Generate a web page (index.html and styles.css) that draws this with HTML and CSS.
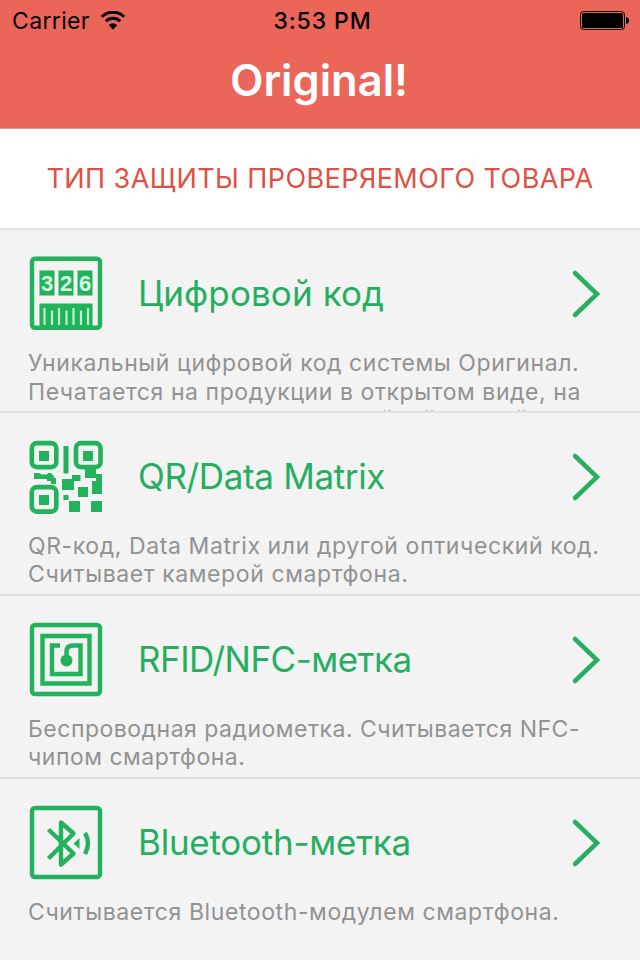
FILE: index.html
```html
<!DOCTYPE html>
<html lang="ru">
<head>
<meta charset="utf-8">
<title>Original!</title>
<link rel="stylesheet" href="styles.css">
</head>
<body>
<header class="navbar">
  <div class="status">
    <div class="carrier"><span>Carrier</span>
      <svg class="wifi" width="26" height="20" viewBox="0 0 26 20"><path d="M1.800 5.700a16 16 0 0 1 22.400 0M5.800 10.200a10.300 10.300 0 0 1 14.400 0" fill="none" stroke="#000" stroke-width="3"/><path d="M8.700 14a6.200 6.200 0 0 1 8.600 0L13 18.700z"/></svg>
    </div>
    <div class="clock">3:53 PM</div>
    <div class="power">
      <svg width="50" height="20" viewBox="0 0 50 20"><rect x=".5" y=".5" width="44" height="18" rx="3" fill="none" stroke="#000"/><rect x="2" y="2" width="41" height="15" rx="1.500"/><path d="M46 6q3 .5 3 3.500t-3 3.500z"/></svg>
    </div>
  </div>
  <h1 class="title">Original!</h1>
</header>
<h2 class="section">ТИП ЗАЩИТЫ ПРОВЕРЯЕМОГО ТОВАРА</h2>
<main class="list">
  <article class="row">
    <div class="head">
      <svg class="icon" viewBox="0 0 76 76"><rect x="4" y="3.800" width="68" height="69" rx="3" fill="none" stroke="#22b25b" stroke-width="4.400"/><path fill="#22b25b" d="M11.500 15.500h15v25h-15zm19 0h15v25h-15zm19 0h15v25h-15zM11.500 48.500h53V73h-53z"/><g class="digits"><text x="19" y="36">3</text><text x="38" y="36">2</text><text x="57" y="36">6</text></g><path d="M16.500 53v17M24 55.500v14.500M31 53v17M38.500 55.500v14.500M45.500 53v17M53 55.500v14.500M60 53v17" stroke="#b9f3cc" stroke-width="2.200"/></svg>
      <h3 class="name n1">Цифровой код</h3>
      <svg class="chevron" viewBox="0 0 30 50"><path d="M4 4l22 21L4 46"/></svg>
    </div>
    <p class="desc d1">Уникальный цифровой код системы Оригинал.<br>Печатается на продукции в открытом виде, на<br>упаковках или этикетке с двойной меткой</p>
  </article>
  <article class="row">
    <div class="head">
      <svg class="icon" viewBox="0 0 76 76"><g fill="none" stroke="#22b25b" stroke-width="4.600"><rect x="3.800" y="5.100" width="24.500" height="24" rx="5"/><rect x="48" y="5.100" width="24.500" height="24" rx="5"/><rect x="3.800" y="49.100" width="24.500" height="24.500" rx="5"/></g><path fill="#22b25b" d="M11 13h10v10H11zm44 0h10v10H55zM11 57h10v10H11zM35.500 8h5v27.500h-5zM6 35h5l3 1.500h5l1-1.500h3l3 3.500v1.500h2v6h-5v-3h-4v-2H6zM44 37h8.500v6H46v9H34V41h10zM57 31h11v5h6v20H64V43h4v-3H57zM50 49h10v10H50zM35.500 57h5v5h-5zM41 63h11v11H41zm22 0h11v11H63z"/></svg>
      <h3 class="name n2">QR/Data Matrix</h3>
      <svg class="chevron" viewBox="0 0 30 50"><path d="M4 4l22 21L4 46"/></svg>
    </div>
    <p class="desc d2">QR-код, Data Matrix или другой оптический код.<br>Считывает камерой смартфона.</p>
  </article>
  <article class="row">
    <div class="head">
      <svg class="icon" viewBox="0 0 76 76"><g fill="none" stroke="#22b25b" stroke-width="4.400"><rect x="4" y="4" width="68" height="69" rx="3"/><path d="M14.500 15h47v47.500h-47z"/><path d="M32 24.500h-8v28.500h28.500V24.500H45q-6.500 0-6.500 6V40"/></g><circle cx="38.500" cy="39.500" r="6" fill="#22b25b"/></svg>
      <h3 class="name n3">RFID/NFC-метка</h3>
      <svg class="chevron" viewBox="0 0 30 50"><path d="M4 4l22 21L4 46"/></svg>
    </div>
    <p class="desc d3">Беспроводная радиометка. Считывается NFC-<br>чипом смартфона.</p>
  </article>
  <article class="row">
    <div class="head">
      <svg class="icon" viewBox="0 0 76 76"><g fill="none" stroke="#22b25b" stroke-width="4.400"><rect x="4" y="4" width="68" height="69" rx="3"/><path stroke-linejoin="round" d="M20.500 25.500L45.500 49.500 33 60.500V18.500l12.500 11L20.500 54.500"/><path d="M57 29q6 10 0 21"/></g><path fill="#22b25b" d="M45.500 39.500l6-5.500v11z"/></svg>
      <h3 class="name n4">Bluetooth-метка</h3>
      <svg class="chevron" viewBox="0 0 30 50"><path d="M4 4l22 21L4 46"/></svg>
    </div>
    <p class="desc d4">Считывается Bluetooth-модулем смартфона.</p>
  </article>
</main>
</body>
</html>
```
FILE: styles.css
```css
* { box-sizing: border-box; margin: 0; padding: 0; }
body {
  width: 640px;
  height: 960px;
  overflow: hidden;
  background: #f3f3f3;
  font-family: Inter, "Liberation Sans", sans-serif;
}
.navbar {
  height: 129px;
  background: #eb6559;
  border-bottom: 1px solid #d3a39e;
}
.status {
  display: grid;
  grid-template-columns: 1fr auto 1fr;
  align-items: center;
  height: 40px;
  padding: 1px 10px 0 12px;
  font-size: 23px;
  color: #000;
}
.carrier { display: flex; align-items: center; gap: 10px; letter-spacing: .35px; }
.clock { font-weight: 500; letter-spacing: .9px; padding-left: 3px; }
.power { display: flex; justify-content: flex-end; }
.title {
  height: 80px;
  line-height: 80px;
  text-align: center;
  font-size: 43.5px;
  font-weight: 600;
  color: #fff;
  padding-right: 2px;
}
.section {
  height: 101px;
  line-height: 100px;
  border-bottom: 2px solid #e1e1e1;
  background: #fff;
  text-align: center;
  font-size: 27px;
  font-weight: 400;
  letter-spacing: .42px;
  color: #dd5145;
  white-space: nowrap;
}
.row {
  height: 183px;
  padding: 25px 28px 0;
  border-bottom: 2px solid #e1e1e1;
  overflow: hidden;
}
.row:last-child { border-bottom: 0; }
.head { display: flex; align-items: center; height: 76px; }
.icon { width: 76px; height: 76px; flex: none; }
.digits { font: bold 22px "Liberation Sans", sans-serif; fill: #d9ffe6; text-anchor: middle; }
.name { flex: 1; margin-left: 34px; padding-bottom: 1px; font-size: 35px; font-weight: 400; color: #25ae60; white-space: nowrap; }
.n1 { letter-spacing: .1px; }
.n2 { letter-spacing: -.35px; }
.n3 { letter-spacing: -.5px; }
.n4 { letter-spacing: -.25px; }
.chevron { width: 30px; height: 50px; margin: 2px 11px 0 0; flex: none; fill: none; stroke: #27ae60; stroke-width: 4.5; stroke-linecap: round; }
.desc { margin-top: 18px; font-size: 23px; line-height: 28px; color: #929292; white-space: nowrap; letter-spacing: .6px; }
.d1 { line-height: 28.6px; letter-spacing: .57px; }
.d3 { letter-spacing: .5px; }
```
